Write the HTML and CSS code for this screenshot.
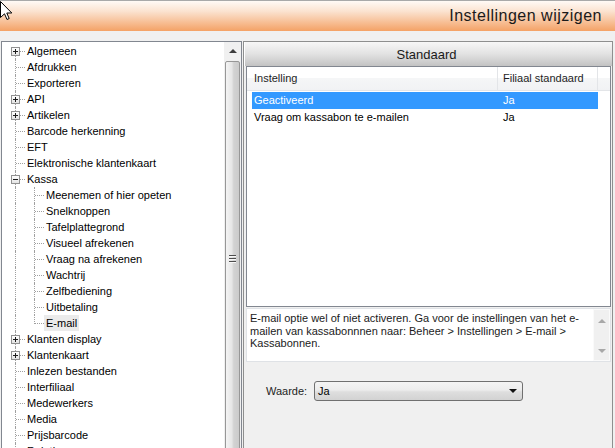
FILE: index.html
```html
<!DOCTYPE html>
<html lang="nl">
<head>
<meta charset="utf-8">
<title>Instellingen wijzigen</title>
<link rel="stylesheet" href="styles.css">
</head>
<body>
<div class="app">
  <header class="titlebar"><h1 class="title">Instellingen wijzigen</h1></header>
  <svg class="cursor" width="13" height="20" viewBox="0 0 13 20"><path d="M0.5 0.5 V16.5 L4.5 12.8 L7 18.5 L9.2 17.5 L6.8 12 H11.8 Z" fill="#fff" stroke="#000" stroke-width="1" stroke-linejoin="miter"/></svg>
  <main class="main">
    <section class="tree-panel">
      <div class="tree">
        <div class="row"><span class="cell first"><span class="box plus"></span></span><span class="label">Algemeen</span></div>
        <div class="row"><span class="cell tee"></span><span class="label">Afdrukken</span></div>
        <div class="row"><span class="cell tee"></span><span class="label">Exporteren</span></div>
        <div class="row"><span class="cell tee"><span class="box plus"></span></span><span class="label">API</span></div>
        <div class="row"><span class="cell tee"><span class="box plus"></span></span><span class="label">Artikelen</span></div>
        <div class="row"><span class="cell tee"></span><span class="label">Barcode herkenning</span></div>
        <div class="row"><span class="cell tee"></span><span class="label">EFT</span></div>
        <div class="row"><span class="cell tee"></span><span class="label">Elektronische klantenkaart</span></div>
        <div class="row"><span class="cell tee"><span class="box minus"></span></span><span class="label">Kassa</span></div>
        <div class="row"><span class="cell pipe"></span><span class="cell tee"></span><span class="label">Meenemen of hier opeten</span></div>
        <div class="row"><span class="cell pipe"></span><span class="cell tee"></span><span class="label">Snelknoppen</span></div>
        <div class="row"><span class="cell pipe"></span><span class="cell tee"></span><span class="label">Tafelplattegrond</span></div>
        <div class="row"><span class="cell pipe"></span><span class="cell tee"></span><span class="label">Visueel afrekenen</span></div>
        <div class="row"><span class="cell pipe"></span><span class="cell tee"></span><span class="label">Vraag na afrekenen</span></div>
        <div class="row"><span class="cell pipe"></span><span class="cell tee"></span><span class="label">Wachtrij</span></div>
        <div class="row"><span class="cell pipe"></span><span class="cell tee"></span><span class="label">Zelfbediening</span></div>
        <div class="row"><span class="cell pipe"></span><span class="cell tee"></span><span class="label">Uitbetaling</span></div>
        <div class="row"><span class="cell pipe"></span><span class="cell end"></span><span class="label selected">E-mail</span></div>
        <div class="row"><span class="cell tee"><span class="box plus"></span></span><span class="label">Klanten display</span></div>
        <div class="row"><span class="cell tee"><span class="box plus"></span></span><span class="label">Klantenkaart</span></div>
        <div class="row"><span class="cell tee"></span><span class="label">Inlezen bestanden</span></div>
        <div class="row"><span class="cell tee"></span><span class="label">Interfiliaal</span></div>
        <div class="row"><span class="cell tee"></span><span class="label">Medewerkers</span></div>
        <div class="row"><span class="cell tee"></span><span class="label">Media</span></div>
        <div class="row"><span class="cell tee"></span><span class="label">Prijsbarcode</span></div>
        <div class="row"><span class="cell tee"></span><span class="label">Relaties</span></div>
      </div>
      <div class="vscroll">
        <div class="vs-btn"><span class="arrow-up"></span></div>
        <div class="vs-thumb"><span class="grip"></span></div>
      </div>
    </section>
    <section class="detail">
      <div class="detail-head">Standaard</div>
      <div class="listview">
        <div class="lv-header">
          <div class="lv-col c1">Instelling</div>
          <div class="lv-col c2">Filiaal standaard</div>
          <div class="lv-col c3"></div>
        </div>
        <div class="lv-body">
          <div class="lv-row selected"><span class="lv-cell c1">Geactiveerd</span><span class="lv-cell c2">Ja</span></div>
          <div class="lv-row"><span class="lv-cell c1">Vraag om kassabon te e-mailen</span><span class="lv-cell c2">Ja</span></div>
        </div>
      </div>
      <div class="desc">
        <p class="desc-text">E-mail optie wel of niet activeren. Ga voor de instellingen van het e-<br>mailen van kassabonnnen naar: Beheer &gt; Instellingen &gt; E-mail &gt;<br>Kassabonnen.</p>
        <div class="desc-scroll"><span class="arrow-up light"></span><span class="arrow-down light"></span></div>
      </div>
      <div class="field">
        <label class="field-label">Waarde:</label>
        <div class="combo"><span class="combo-value">Ja</span><span class="combo-arrow"></span></div>
      </div>
    </section>
  </main>
</div>
</body>
</html>
```

FILE: styles.css
```css
* { box-sizing: border-box; margin: 0; padding: 0; }
html, body { width: 615px; height: 448px; overflow: hidden; }
body {
  background: #f0f0f0;
  font-family: "Liberation Sans", Arial, sans-serif;
  font-size: 11px;
  color: #000;
}
.app { position: relative; width: 615px; height: 448px; overflow: hidden; }

.titlebar {
  height: 31px;
  border-top: 1px solid #a9a9a9;
  background: linear-gradient(#fffaf6, #fbe2cf 35%, #f4a266);
  display: flex;
  align-items: center;
  justify-content: flex-end;
  padding-right: 13px;
}
.title { font-weight: normal; font-size: 16px; letter-spacing: 0.5px; color: #1a1a1a; }
.cursor { position: absolute; left: 0; top: 1px; }

.main { display: flex; padding-top: 10px; height: 417px; }

/* tree */
.tree-panel {
  margin-left: 1px;
  width: 241px;
  height: 420px;
  border: 1px solid #828790;
  background: #fff;
  display: flex;
}
.tree { flex: 1; padding: 1px 0 0 4px; overflow: hidden; }
.row { display: flex; height: 16px; white-space: nowrap; }
.cell { position: relative; width: 19px; height: 16px; flex: none; }
.cell::before {
  content: "";
  position: absolute;
  left: 9px;
  top: 0;
  bottom: 0;
  border-left: 1px dotted #a0a0a0;
}
.cell.first::before { top: 8px; }
.cell.end::before { bottom: 7px; }
.cell.tee::after, .cell.first::after, .cell.end::after {
  content: "";
  position: absolute;
  left: 10px;
  top: 8px;
  width: 9px;
  border-top: 1px dotted #a0a0a0;
}
.box {
  position: absolute;
  left: 5px;
  top: 4px;
  width: 9px;
  height: 9px;
  border: 1px solid #919191;
  background: linear-gradient(#ffffff, #e4e4e4);
  z-index: 1;
}
.box::before {
  content: "";
  position: absolute;
  left: 1px;
  top: 3px;
  width: 5px;
  height: 1px;
  background: #1c1c1c;
}
.box.plus::after {
  content: "";
  position: absolute;
  left: 3px;
  top: 1px;
  width: 1px;
  height: 5px;
  background: #1c1c1c;
}
.label { padding: 0 2px; line-height: 16px; height: 16px; }
.label.selected { background: #ebebeb; }

.vscroll {
  width: 17px;
  flex: none;
  background: #f0f0f0;
  display: flex;
  flex-direction: column;
  align-items: center;
}
.vs-btn {
  height: 18px;
  width: 100%;
  display: flex;
  align-items: center;
  justify-content: center;
}
.arrow-up, .arrow-down {
  width: 0; height: 0;
  border-left: 4px solid transparent;
  border-right: 4px solid transparent;
}
.arrow-up { border-bottom: 4px solid #3c3c3c; }
.arrow-down { border-top: 4px solid #3c3c3c; }
.arrow-up.light { border-bottom-color: #a8a8a8; }
.arrow-down.light { border-top-color: #a8a8a8; }
.vs-thumb {
  margin-top: 1px;
  width: 15px;
  flex: 1;
  border: 1px solid #979797;
  border-radius: 2px;
  background: linear-gradient(to right, #f4f4f4, #e6e6e6 45%, #d2d2d2 60%, #cbcbcb);
  display: flex;
  justify-content: center;
  padding-top: 193px;
}
.grip {
  width: 7px;
  height: 8px;
  background: repeating-linear-gradient(#4d4d4d 0 1px, #f8f8f8 1px 2px, transparent 2px 3px);
}

/* detail */
.detail {
  margin-left: 1px;
  width: 370px;
  height: 420px;
  border: 1px solid #8e8f8f;
  display: flex;
  flex-direction: column;
}
.detail-head {
  height: 24px;
  border-left: 1px solid #fff;
  background: linear-gradient(#f7f7f7, #e2e2e2 50%, #c3c3c3);
  font-size: 13px;
  color: #1a1a1a;
  display: flex;
  align-items: center;
  justify-content: center;
  padding-right: 4px;
}
.listview {
  margin: 0 1px 0 2px;
  height: 241px;
  border: 1px solid #828790;
  background: #fff;
  flex: none;
}
.lv-header {
  display: flex;
  height: 24px;
  border-bottom: 1px solid #e3e5e8;
  background: linear-gradient(#ffffff 0%, #ffffff 50%, #f5f6f7 50%, #f1f2f4 100%);
}
.lv-col {
  border-right: 1px solid #e3e5e8;
  line-height: 23px;
  color: #1e1e1e;
}
.lv-col.c1 { width: 251px; padding-left: 7px; }
.lv-col.c2 { width: 100px; padding-left: 5px; }
.lv-col.c3 { flex: 1; border-right: none; }
.lv-body { padding: 1px 0 0 5px; }
.lv-row { display: flex; width: 346px; height: 17px; line-height: 17px; }
.lv-row.selected { background: #3399ff; color: #fff; }
.lv-cell.c1 { width: 245px; padding-left: 2px; }
.lv-cell.c2 { padding-left: 6px; }

.desc {
  margin: 1px 1px 0 2px;
  height: 54px;
  border: 1px solid #dfe2e6;
  background: #fff;
  display: flex;
  flex: none;
}
.desc-text {
  flex: 1;
  padding: 3px 0 0 3px;
  line-height: 12.6px;
  white-space: nowrap;
  color: #1b1b1b;
}
.desc-scroll {
  width: 17px;
  background: #f0f0f0;
  border: 1px solid #fafafa;
  display: flex;
  flex-direction: column;
  align-items: center;
  justify-content: space-between;
  padding: 9px 0 7px;
}

.field {
  display: flex;
  align-items: center;
  margin-top: 19px;
  padding-left: 22px;
}
.field-label { width: 48px; color: #1e1e1e; }
.combo {
  width: 209px;
  height: 20px;
  border: 1px solid #707070;
  border-radius: 3px;
  background: linear-gradient(#f4f4f4, #ececec 45%, #dedede 55%, #d2d2d2);
  display: flex;
  align-items: center;
  justify-content: space-between;
  padding: 0 5px 0 3px;
}
.combo-arrow {
  width: 0; height: 0;
  border-left: 4px solid transparent;
  border-right: 4px solid transparent;
  border-top: 4px solid #111;
}
```
